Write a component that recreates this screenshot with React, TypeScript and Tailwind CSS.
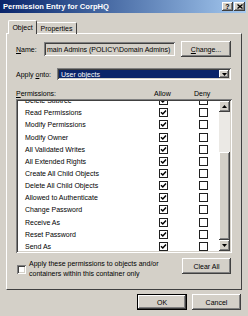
import React from 'react'

const perms = [
  'Delete Subtree',
  'Read Permissions',
  'Modify Permissions',
  'Modify Owner',
  'All Validated Writes',
  'All Extended Rights',
  'Create All Child Objects',
  'Delete All Child Objects',
  'Allowed to Authenticate',
  'Change Password',
  'Receive As',
  'Reset Password',
  'Send As',
]

const raised =
  'bg-[#d4d0c8] shadow-[inset_-1px_-1px_#404040,inset_1px_1px_#ffffff,inset_-2px_-2px_#808080,inset_2px_2px_#d4d0c8]'
const sunken =
  'shadow-[inset_1px_1px_#808080,inset_-1px_-1px_#ffffff,inset_2px_2px_#404040,inset_-2px_-2px_#d4d0c8]'

function Box({ checked }: { checked: boolean }): React.JSX.Element {
  return (
    <div className="flex h-[9px] w-[9px] items-center justify-center border border-[#202020] bg-white">
      {checked && (
        <svg width="7" height="7" viewBox="0 0 7 7">
          <path d="M1 3.2 L2.8 5 L6 1.6" fill="none" stroke="#000" strokeWidth="1.5" />
        </svg>
      )}
    </div>
  )
}

function Arrow({ up }: { up: boolean }): React.JSX.Element {
  return (
    <div className={`flex h-[11px] w-[11px] shrink-0 items-center justify-center ${raised}`}>
      <svg width="5" height="3" viewBox="0 0 5 3">
        <path d={up ? 'M0 3 L2.5 0 L5 3 Z' : 'M0 0 L5 0 L2.5 3 Z'} fill="#000" />
      </svg>
    </div>
  )
}

export default function App(): React.JSX.Element {
  return (
    <div className="relative h-[316px] w-[248px] overflow-hidden bg-[#d4d0c8] font-['Liberation_Sans',Arial,sans-serif] text-[7px] leading-none text-black">
      <div className="flex h-[13px] w-[246px] items-center justify-between bg-linear-to-r from-[#0a246a] to-[#a6caf0] pl-[3px] pr-[1px]">
        <span className="text-[7.6px] font-bold text-white">Permission Entry for CorpHQ</span>
        <div className="flex gap-[1px]">
          <div className={`flex h-[9px] w-[11px] items-center justify-center text-[7px] font-bold ${raised}`}>?</div>
          <div className={`flex h-[9px] w-[11px] items-center justify-center ${raised}`}>
            <svg width="6" height="5" viewBox="0 0 6 5">
              <path d="M0.5 0.5 L5.5 4.5 M5.5 0.5 L0.5 4.5" stroke="#000" strokeWidth="1.3" />
            </svg>
          </div>
        </div>
      </div>

      <div className="relative z-10 mt-[7px] -mb-[1px] flex h-[14px] items-end pl-[8px]">
        <div className="flex h-[14px] w-[29px] items-center justify-center rounded-t-[2px] border-t border-l border-r border-t-white border-l-white border-r-[#404040] bg-[#d4d0c8] pb-[1px]">
          Object
        </div>
        <div className="flex h-[12px] w-[40px] items-center justify-center rounded-tr-[2px] border-t border-r border-t-white border-r-[#404040]">
          Properties
        </div>
      </div>

      <div className="ml-[6px] h-[257px] w-[236px] border-t border-l border-r border-b border-t-white border-l-white border-r-[#404040] border-b-[#404040] pl-[9px] pt-[7px]">
        <div className="flex h-[16px] items-center">
          <span className="w-[28px]">
            <u>N</u>ame:
          </span>
          <div className={`flex h-[14px] w-[131px] items-center bg-[#d4d0c8] pl-[3px] ${sunken}`}>
            main Admins (POLICY\Domain Admins)
          </div>
          <div className={`ml-[6px] flex h-[16px] w-[50px] items-center justify-center ${raised}`}>
            <span>
              <u>C</u>hange...
            </span>
          </div>
        </div>

        <div className="mt-[11px] flex h-[12px] items-center">
          <span className="w-[41px]">
            Apply <u>o</u>nto:
          </span>
          <div className={`flex h-[12px] w-[174px] items-center bg-white p-[2px] ${sunken}`}>
            <div className="flex h-full flex-1 items-center bg-[#0a246a] pl-[2px] text-white">User objects</div>
            <div className={`flex h-[8px] w-[10px] items-center justify-center ${raised}`}>
              <svg width="5" height="3" viewBox="0 0 5 3">
                <path d="M0 0 L5 0 L2.5 3 Z" fill="#000" />
              </svg>
            </div>
          </div>
        </div>

        <div className="mt-[8px] flex h-[10px] items-center">
          <span className="w-[138px]">
            <u>P</u>ermissions:
          </span>
          <span className="w-[40px]">Allow</span>
          <span>Deny</span>
        </div>

        <div className={`mt-[1px] flex h-[154px] w-[216px] bg-white p-[2px] ${sunken}`}>
          <div className="h-full w-[201px] overflow-hidden">
            <div className="-mt-[6.5px]">
              {perms.map((p) => (
                <div key={p} className="grid h-[12.17px] grid-cols-[141px_40px_1fr] items-center">
                  <span className="pl-[7px]">{p}</span>
                  <Box checked />
                  <Box checked={false} />
                </div>
              ))}
            </div>
          </div>
          <div className="flex h-full w-[11px] flex-col bg-[#ebe9e5]">
            <Arrow up />
            <div className="h-[40px]" />
            <div className={`h-[88px] w-[11px] ${raised}`} />
            <Arrow up={false} />
          </div>
        </div>

        <div className="mt-[5px] flex w-[215px] items-start justify-between">
          <div className="flex items-start">
            <div className={`ml-[1px] mt-[7px] h-[9px] w-[9px] bg-white ${sunken}`} />
            <div className="mt-[1px] ml-[3px] leading-[10px]">
              Apply these permissions to objects and/or
              <br />
              containers within this container only
            </div>
          </div>
          <div className={`flex h-[16px] w-[49px] items-center justify-center ${raised}`}>Clear All</div>
        </div>
      </div>

      <div className="mt-[4px] flex justify-end gap-[5px] pr-[7px]">
        <div className="flex h-[16px] w-[50px] items-center justify-center border border-black bg-[#d4d0c8] shadow-[inset_-1px_-1px_#404040,inset_1px_1px_#ffffff,inset_-2px_-2px_#808080]">
          OK
        </div>
        <div className={`flex h-[16px] w-[49px] items-center justify-center ${raised}`}>Cancel</div>
      </div>
    </div>
  )
}
